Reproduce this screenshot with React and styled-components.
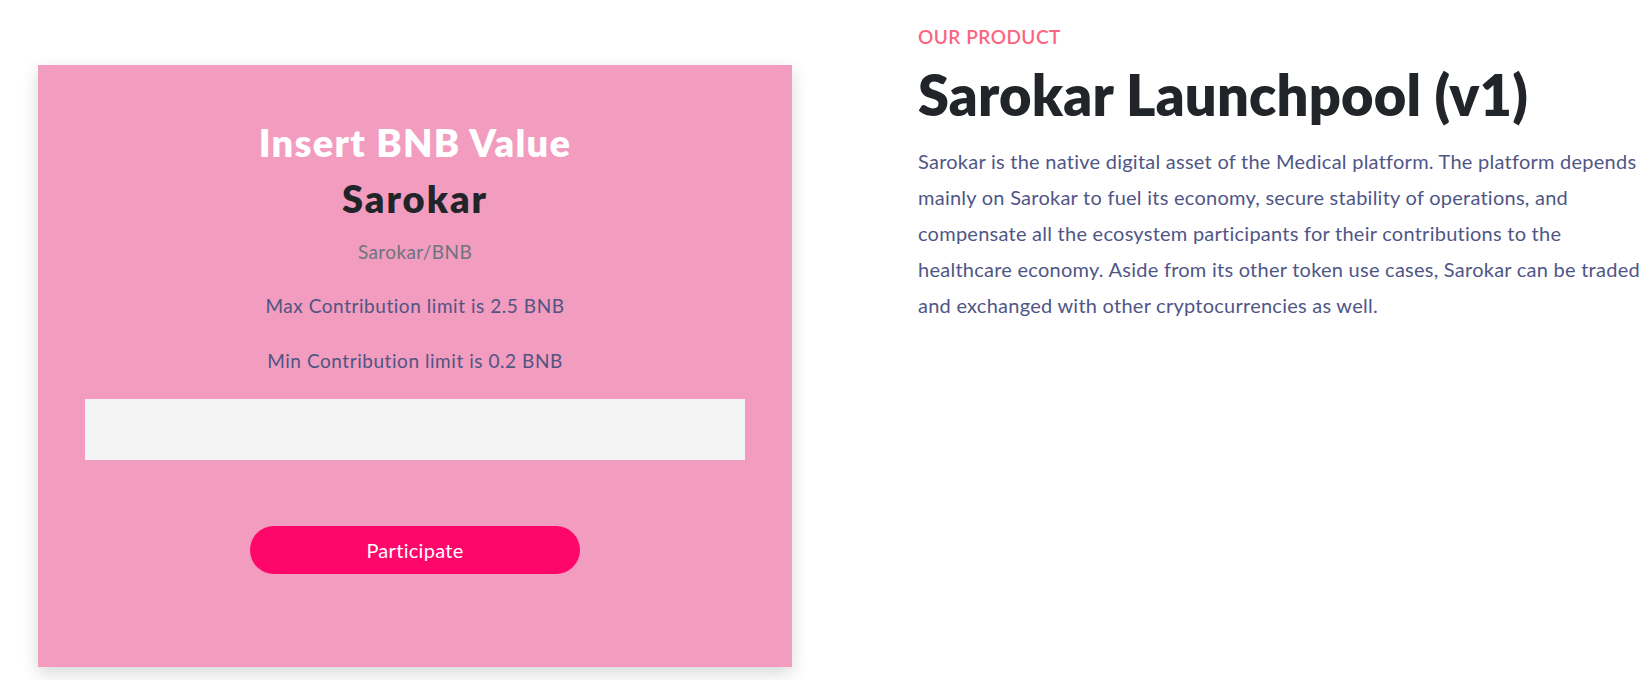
import React from 'react';
import styled, { createGlobalStyle } from 'styled-components';

const GlobalStyle = createGlobalStyle`
  body {
    margin: 0;
    background: #ffffff;
    font-family: Lato, "Open Sans", sans-serif;
  }
`;

const Section = styled.section`
  display: grid;
  grid-template-columns: 754px 1fr;
  column-gap: 126px;
  padding: 0 4px 0 38px;
  height: 680px;
  box-sizing: border-box;
`;

const Card = styled.div`
  margin-top: 65px;
  height: 602px;
  box-sizing: border-box;
  padding: 54px 47px 0;
  background: #f29cbf;
  box-shadow: 0 6px 16px rgba(0, 0, 0, 0.16);
  display: flex;
  flex-direction: column;
  align-items: center;
  text-align: center;
`;

const Heading = styled.h2`
  margin: 0 0 ${p => p.gap || 0}px;
  font-size: 38px;
  line-height: 46px;
  font-weight: 800;
  letter-spacing: ${p => (p.light ? 1.3 : 2)}px;
  color: ${p => (p.light ? '#ffffff' : '#212529')};
`;

const Pair = styled.p`
  margin: 0 0 27px;
  font-size: 19px;
  line-height: 27px;
  letter-spacing: 0.4px;
  color: #6c757d;
`;

const Limit = styled.p`
  margin: 0 0 ${p => p.gap || 0}px;
  font-size: 19px;
  line-height: 28px;
  letter-spacing: 0.55px;
  color: #4f5582;
`;

const AmountInput = styled.input`
  width: 100%;
  height: 61px;
  box-sizing: border-box;
  border: none;
  background: #f4f4f4;
  outline: none;
  font-size: 18px;
  padding: 0 16px;
`;

const ParticipateButton = styled.button`
  margin-top: 66px;
  width: 330px;
  height: 48px;
  border: none;
  border-radius: 24px;
  background: #ff066b;
  color: #ffffff;
  font-family: inherit;
  font-size: 20px;
  letter-spacing: 0.3px;
  cursor: pointer;
`;

const Info = styled.div`
  padding-top: 25px;
`;

const Eyebrow = styled.div`
  font-size: 19px;
  font-weight: 600;
  letter-spacing: 0.5px;
  color: #fc6480;
  line-height: 23px;
`;

const Title = styled.h1`
  margin: 13px 0 15px;
  font-size: 56px;
  font-weight: 800;
  line-height: 67px;
  letter-spacing: 0.2px;
  color: #212529;
`;

const Body = styled.p`
  margin: 0;
  font-size: 20px;
  letter-spacing: 0.25px;
  line-height: 36px;
  color: #4f5686;
  max-width: 730px;
`;

export default function App() {
  return (
    <>
      <GlobalStyle />
      <Section>
        <Card>
          <Heading light gap={10}>Insert BNB Value</Heading>
          <Heading gap={17}>Sarokar</Heading>
          <Pair>Sarokar/BNB</Pair>
          <Limit gap={27}>Max Contribution limit is 2.5 BNB</Limit>
          <Limit gap={24}>Min Contribution limit is 0.2 BNB</Limit>
          <AmountInput type="text" />
          <ParticipateButton>Participate</ParticipateButton>
        </Card>
        <Info>
          <Eyebrow>OUR PRODUCT</Eyebrow>
          <Title>Sarokar Launchpool (v1)</Title>
          <Body>
            Sarokar is the native digital asset of the Medical platform. The platform depends
            mainly on Sarokar to fuel its economy, secure stability of operations, and
            compensate all the ecosystem participants for their contributions to the
            healthcare economy. Aside from its other token use cases, Sarokar can be traded
            and exchanged with other cryptocurrencies as well.
          </Body>
        </Info>
      </Section>
    </>
  );
}
